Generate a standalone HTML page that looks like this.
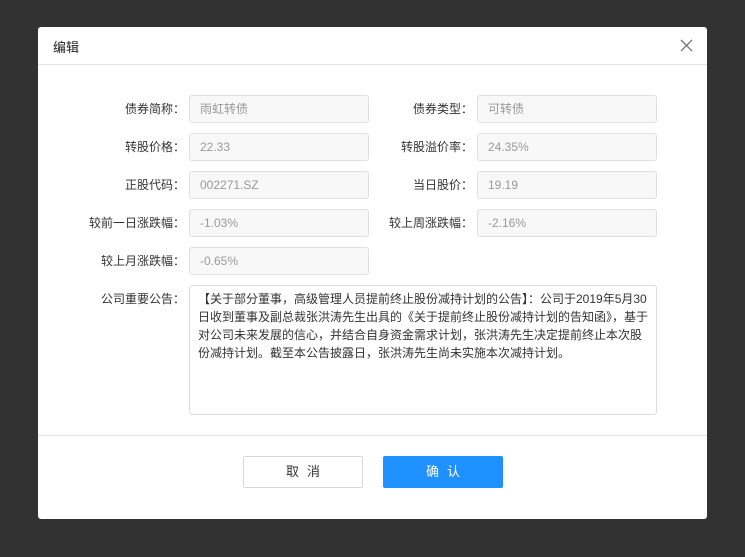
<!DOCTYPE html>
<html><head><meta charset="utf-8"><style>
*{box-sizing:border-box;margin:0;padding:0}
body{width:745px;height:557px;background:#323232;font-family:"Liberation Sans","Noto Sans CJK SC",sans-serif;font-size:12px;color:#333;position:relative;overflow:hidden}
.m{position:absolute;left:38px;top:27px;width:669px;height:492px;background:#fff;border-radius:3px}
.t{position:absolute;left:15px;top:10px;font-size:13px;color:#222}
.x{position:absolute;right:14px;top:12px;width:13px;height:13px}
.hl{position:absolute;left:0;right:0;top:37px;border-top:1px solid #e4e4e4}
.fl{position:absolute;left:0;right:0;top:408px;border-top:1px solid #e4e4e4}
.l{position:absolute;width:140px;text-align:right;line-height:28px;color:#333}
.i{position:absolute;width:180px;height:28px;border:1px solid #e0e0e0;border-radius:3px;background:#f8f8f8;color:#999;line-height:26px;padding-left:10px}
.ta{position:absolute;left:151px;top:258px;width:468px;height:130px;border:1px solid #dcdcdc;border-radius:3px;padding:4px 8px;line-height:18px;color:#333}
.b{position:absolute;top:429px;width:120px;height:32px;border-radius:2px;text-align:center;line-height:30px;font-size:13px;letter-spacing:8px;text-indent:8px}
</style></head><body>
<div class="m">
<div class="t">编辑</div>
<svg class="x" viewBox="0 0 13 13"><path d="M1 1L12 12M12 1L1 12" stroke="#777" stroke-width="1.3"/></svg>
<div class="hl"></div>
<div class="l" style="left:7px;top:68px">债券简称：</div><div class="i" style="left:151px;top:68px">雨虹转债</div>
<div class="l" style="left:295px;top:68px">债券类型：</div><div class="i" style="left:439px;top:68px">可转债</div>
<div class="l" style="left:7px;top:106px">转股价格：</div><div class="i" style="left:151px;top:106px">22.33</div>
<div class="l" style="left:295px;top:106px">转股溢价率：</div><div class="i" style="left:439px;top:106px">24.35%</div>
<div class="l" style="left:7px;top:144px">正股代码：</div><div class="i" style="left:151px;top:144px">002271.SZ</div>
<div class="l" style="left:295px;top:144px">当日股价：</div><div class="i" style="left:439px;top:144px">19.19</div>
<div class="l" style="left:7px;top:182px">较前一日涨跌幅：</div><div class="i" style="left:151px;top:182px">-1.03%</div>
<div class="l" style="left:295px;top:182px">较上周涨跌幅：</div><div class="i" style="left:439px;top:182px">-2.16%</div>
<div class="l" style="left:7px;top:220px">较上月涨跌幅：</div><div class="i" style="left:151px;top:220px">-0.65%</div>
<div class="l" style="left:7px;top:258px">公司重要公告：</div>
<div class="ta">【关于部分董事，高级管理人员提前终止股份减持计划的公告】：公司于2019年5月30日收到董事及副总裁张洪涛先生出具的《关于提前终止股份减持计划的告知函》，基于对公司未来发展的信心，并结合自身资金需求计划，张洪涛先生决定提前终止本次股份减持计划。截至本公告披露日，张洪涛先生尚未实施本次减持计划。</div>
<div class="fl"></div>
<div class="b" style="left:205px;border:1px solid #d9d9d9;color:#333">取消</div>
<div class="b" style="left:345px;background:#1e90ff;border:1px solid #1e90ff;color:#fff">确认</div>
</div>
</body></html>
